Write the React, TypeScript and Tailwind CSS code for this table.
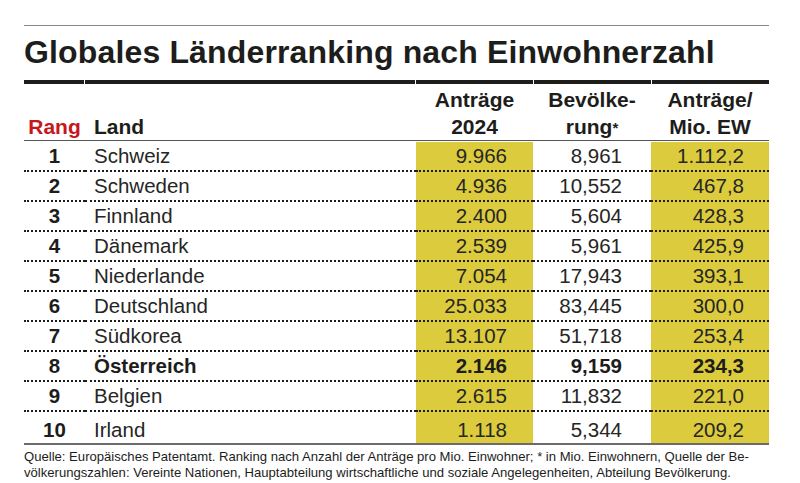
import React from "react";

const rows = [
  ["1", "Schweiz", "9.966", "8,961", "1.112,2"],
  ["2", "Schweden", "4.936", "10,552", "467,8"],
  ["3", "Finnland", "2.400", "5,604", "428,3"],
  ["4", "Dänemark", "2.539", "5,961", "425,9"],
  ["5", "Niederlande", "7.054", "17,943", "393,1"],
  ["6", "Deutschland", "25.033", "83,445", "300,0"],
  ["7", "Südkorea", "13.107", "51,718", "253,4"],
  ["8", "Österreich", "2.146", "9,159", "234,3"],
  ["9", "Belgien", "2.615", "11,832", "221,0"],
  ["10", "Irland", "1.118", "5,344", "209,2"],
];

const cols = "grid grid-cols-[61px_331px_117px_118px_118px]";

const App = () => {
  return (
    <div
      className="w-[800px] h-[483px] bg-white pt-[25px] pl-[24px] pr-[31px] text-[#1d1d1b]"
      style={{ fontFamily: '"Liberation Sans", Arial, sans-serif' }}
    >
      <div className="h-px bg-[#8a8a8a]" />
      <h1 className="mt-[10px] text-[32px] leading-[32px] font-bold tracking-[0.15px]">
        Globales Länderranking nach Einwohnerzahl
      </h1>

      {/* thick rule, split per column */}
      <div className="mt-[12px] flex h-[4px] gap-px">
        <div className="w-[60px] bg-[#1d1d1b]" />
        <div className="w-[330px] bg-[#1d1d1b]" />
        <div className="w-[117px] bg-[#1d1d1b]" />
        <div className="w-[117px] bg-[#1d1d1b]" />
        <div className="flex-1 bg-[#1d1d1b]" />
      </div>

      {/* header */}
      <div className={`${cols} h-[57px] items-end border-b border-[#555] text-[21px] leading-[27px] font-bold`}>
        <div className="text-center text-[#c8161d]">Rang</div>
        <div className="pl-[9px]">Land</div>
        <div className="text-center">
          Anträge
          <br />
          2024
        </div>
        <div className="text-center">
          Bevölke-
          <br />
          rung<sup className="text-[15px] relative -top-[1px]">*</sup>
        </div>
        <div className="text-center">
          Anträge/
          <br />
          Mio. EW
        </div>
      </div>

      {/* body */}
      <div className="pt-px border-b-2 border-[#6b6b6b]">
        {rows.map((r, i) => {
          const last = i === rows.length - 1;
          const bold = r[1] === "Österreich";
          const cell = `flex items-center ${
            last ? "h-[31px] pt-[4px]" : "h-[30px] border-b-2 border-dotted border-[#1d1d1b]"
          }`;
          return (
            <div key={r[0]} className={`${cols} text-[20.5px] leading-[24px] ${bold ? "font-bold" : "text-[#262624]"}`}>
              <div className={`${cell} justify-center font-bold text-[#1d1d1b]`}>{r[0]}</div>
              <div className={`${cell} pl-[9px]`}>{r[1]}</div>
              <div className={`${cell} justify-end pr-[26px] bg-[#dccb3c]`}>{r[2]}</div>
              <div className={`${cell} justify-end pr-[29px]`}>{r[3]}</div>
              <div className={`${cell} justify-end pr-[25px] bg-[#dccb3c]`}>{r[4]}</div>
            </div>
          );
        })}
      </div>

      <p className="mt-[4px] text-[13.1px] leading-[15.5px]">
        Quelle: Europäisches Patentamt. Ranking nach Anzahl der Anträge pro Mio. Einwohner; * in Mio. Einwohnern, Quelle der Be-
        <br />
        völkerungszahlen: Vereinte Nationen, Hauptabteilung wirtschaftliche und soziale Angelegenheiten, Abteilung Bevölkerung.
      </p>
    </div>
  );
};

export default App;
